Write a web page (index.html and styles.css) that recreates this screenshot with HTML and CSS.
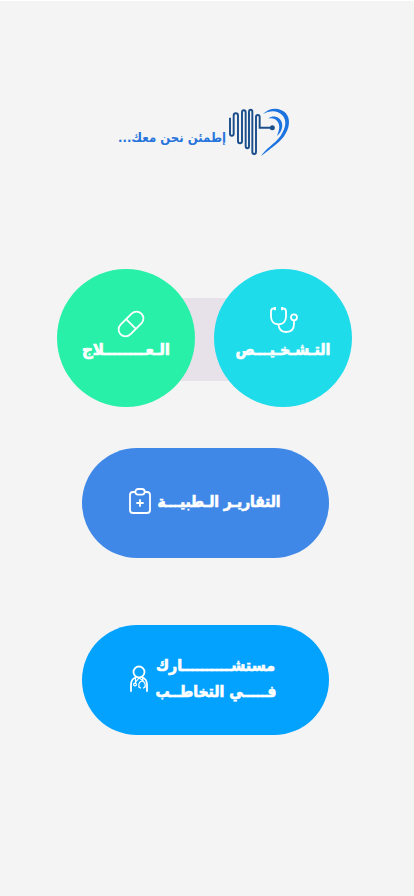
FILE: index.html
```html
<!DOCTYPE html>
<html lang="ar" dir="rtl">
<head>
<meta charset="utf-8">
<meta name="viewport" content="width=device-width, initial-scale=1">
<title>إطمئن نحن معك</title>
<link rel="stylesheet" href="styles.css">
</head>
<body>
<main class="screen">
  <header class="brand">
    <svg class="logo" viewBox="24 21 189 150" aria-hidden="true">
      <path class="wave" d="M30 53V101Q30 107 35.500 107T41 101V47Q41 40 47.500 40T54 47V123Q54 130 60 130T66 123V38Q66 31 71.500 31T77 38V138Q77 145 82 145T87 138V36Q87 29 92 29T97 36V155Q97 162 102.500 162T108 155V52Q108 45 113.500 45T119 52V83H151"/>
      <circle class="node" cx="157" cy="83" r="7.500"/>
      <path class="heart" d="M128 43C149 20 181 22 197 39C213 57 209 86 191 110C174 132 151 145 123 169C135 148 164 132 181 109C197 85 202 62 187 46C172 29 148 31 128 43Z"/>
      <path class="heart" d="M145 55C160 44 179 50 185 66C190 81 184 97 171 108C177 93 181 79 174 67C168 56 159 53 145 55Z"/>
    </svg>
    <svg class="tagline" viewBox="0 0 110 24" direction="rtl"><text x="55" y="16" textLength="108" lengthAdjust="spacingAndGlyphs">إطمئن نحن معك...</text></svg>
  </header>
  <nav class="menu">
    <div class="pair">
      <a class="circle diagnosis">
        <svg class="icon" viewBox="0 0 28 28"><path d="M5 1.500H3.500Q1 1.500 1 4.500V10Q1.500 17 8.500 17.500Q15.500 17 16 10V4.500Q16 1.500 13.500 1.500H12M5 0V3.200M12 0V3.200M8.500 17.500Q9 25 16 25Q24 25 24 17V13.500"/><circle cx="24" cy="10.300" r="3"/></svg>
        <svg class="label" viewBox="0 0 96 28"><text x="48" y="18" textLength="95" lengthAdjust="spacingAndGlyphs">التـشـخـيـــص</text></svg>
      </a>
      <a class="circle treatment">
        <svg class="icon pill" viewBox="0 0 28 28"><g transform="rotate(-45 14 14)"><rect x="-0.700" y="7.100" width="29.400" height="13.800" rx="6.900"/><path d="M14 7.100V20.900"/></g></svg>
        <svg class="label" viewBox="0 0 96 28"><text x="48" y="18" textLength="88" lengthAdjust="spacingAndGlyphs">الـعــــــــلاج</text></svg>
      </a>
    </div>
    <a class="bar reports">
      <svg class="text-one" viewBox="0 0 124 28"><text x="62" y="17.500" textLength="123" lengthAdjust="spacingAndGlyphs">التقاريـر الـطبيـــة</text></svg>
      <svg class="clip" viewBox="0 0 22 27"><path d="M6 4H4Q1 4 1 7V22Q1 25 4 25H18Q21 25 21 22V7Q21 4 18 4H16M11 12V18M8 15H14"/><rect x="6.300" y="1" width="9.400" height="5.600" rx="2.800"/></svg>
    </a>
    <a class="bar advisor">
      <svg class="text-two" viewBox="0 0 124 56"><text x="61.500" y="18.500" textLength="119" lengthAdjust="spacingAndGlyphs">مستشــــــــــارك</text><text x="62" y="44.500" textLength="121" lengthAdjust="spacingAndGlyphs">فـــــي التخاطــب</text></svg>
      <svg class="doctor" viewBox="0 0 20 28"><circle cx="10" cy="7" r="5.500"/><path d="M2 26V20Q2 14 6.500 12.500M13.500 12.500Q18 14 18 20V26"/><path class="thin" d="M6.500 12.500V18M13.500 12.500L14 15.500M6 18L10 13L14 15.500M10 22Q9 17 13 16Q17 17 16 22"/><circle class="thin" cx="6" cy="19.500" r="1.400"/><path class="thin" d="M10 22L11.500 23M16 22L14.500 23"/></svg>
    </a>
  </nav>
</main>
</body>
</html>
```

FILE: styles.css
```css
* { box-sizing: border-box; }
body { margin: 0; background: #f4f4f4; font-family: "DejaVu Sans", sans-serif; }
.screen { width: 414px; height: 896px; border-top: 1px solid #fff; padding-top: 106px; }
svg { display: block; flex: none; overflow: visible; }
text { text-anchor: middle; fill: #fff; stroke: #fff; stroke-width: 0.7; font-size: 16px; font-weight: 700; direction: rtl; }
.brand { display: flex; height: 50px; padding-right: 123px; }
.logo { width: 63px; height: 50px; }
.wave { fill: none; stroke: #1b4f8c; stroke-width: 5.8; }
.node { fill: #1b4f8c; }
.heart { fill: #1b73e0; }
.tagline { width: 110px; height: 24px; margin: 19px 1px 0 0; }
.tagline text { fill: #2674dc; stroke: none; font-size: 13px; }
.menu { display: flex; flex-direction: column; padding: 112px 62px 0 57px; }
.pair { display: flex; justify-content: space-between; height: 138px; background: linear-gradient(#e7e2ea, #e7e2ea) 120px 29px / 60px 83px no-repeat; }
.circle { display: flex; flex-direction: column; align-items: center; width: 138px; height: 138px; border-radius: 50%; padding-top: 38px; }
.diagnosis { background: #1fdcea; }
.diagnosis .icon { margin-right: -2px; }
.treatment { background: #28f0a8; padding-top: 41px; }
.icon { width: 28px; height: 28px; fill: none; stroke: #fff; stroke-width: 1.8; }
.treatment .pill { margin-right: -9px; }
.label { width: 96px; height: 28px; margin-top: 2px; }
.treatment .label { margin-top: -1px; }
.bar { display: flex; align-items: center; width: 247px; height: 110px; margin-right: 23px; border-radius: 55px; }
.reports { background: #3f88e7; margin-top: 41px; padding-right: 48px; }
.advisor { background: #03a2ff; margin-top: 67px; padding-right: 51px; }
.text-one { width: 124px; height: 28px; }
.text-two { width: 124px; height: 56px; }
.clip { width: 22px; height: 27px; margin: 0 6px 3px 0; }
.doctor { width: 20px; height: 28px; margin: 0 5px 2px 0; }
.clip, .doctor { fill: none; stroke: #fff; stroke-width: 1.8; stroke-linecap: round; }
.doctor .thin { stroke-width: 1.2; }
```
